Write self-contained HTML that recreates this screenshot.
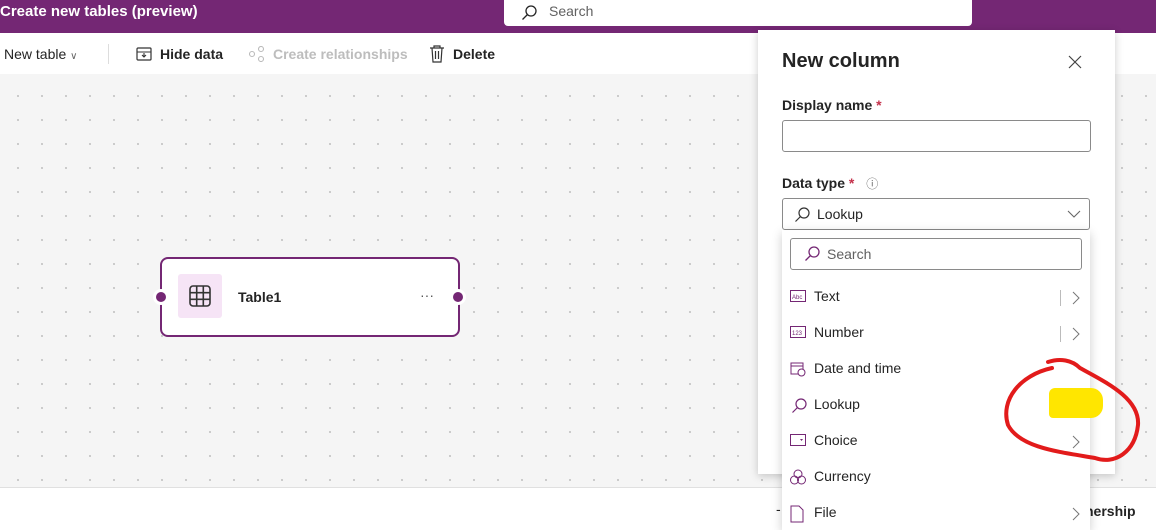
<!DOCTYPE html>
<html><head><style>
*{box-sizing:border-box;margin:0;padding:0}
body{width:1156px;height:525px;overflow:hidden;position:relative;font-family:"Segoe UI","Liberation Sans",sans-serif;background:#fff;color:#242424}
.top{position:absolute;left:0;top:0;width:1156px;height:33px;background:#742774}
.title{position:absolute;left:0;top:3px;color:#fff;font-weight:bold;font-size:15px}
.search{position:absolute;left:504px;top:0;width:468px;height:26px;background:#fff;border-radius:0 0 4px 4px;font-size:14px;color:#616161}
.tb{position:absolute;top:33px;left:0;width:1156px;height:41px;background:#fff;font-size:14px}
.tb span{position:absolute;top:13px}
.canvas{position:absolute;left:0;top:74px;width:1156px;height:413px;background-color:#f5f5f5;background-image:radial-gradient(circle,#c8c8c8 1px,transparent 1.2px);background-size:24px 24px;background-position:6px 10px}
.bottom{position:absolute;left:0;top:487px;width:1156px;height:38px;background:#fff;border-top:1px solid #e0e0e0}
.card{position:absolute;left:160px;top:257px;width:300px;height:80px;background:#fff;border:2px solid #742774;border-radius:8px}
.dot{position:absolute;width:10px;height:10px;border-radius:50%;background:#742774;box-shadow:0 0 0 3px #fff}
.panel{position:absolute;left:758px;top:30px;width:357px;height:444px;background:#fff;box-shadow:0 2px 8px rgba(0,0,0,.2)}
.lbl{position:absolute;font-size:14px;font-weight:600;color:#242424}
.req{color:#c4314b}
.input{position:absolute;border:1px solid #8a8a8a;border-radius:3px;background:#fff}
.dd{position:absolute;left:782px;top:230px;width:308px;height:300px;background:#fff;box-shadow:0 3px 10px rgba(0,0,0,.2)}
.it{position:absolute;left:0;width:308px;height:36px;font-size:14px;color:#242424}
.it .t{position:absolute;left:32px;top:10px}
.it svg{position:absolute;left:8px;top:12px}
.it svg.chev{left:290px;top:13px}
.sep{position:absolute;left:278px;top:12px;width:1px;height:16px;background:#bbb}
</style></head><body>
<div class="top"><div class="title">Create new tables (preview)</div>
<div class="search"><svg style="position:absolute;left:16px;top:4px" width="18" height="18" viewBox="0 0 18 18"><circle cx="11" cy="7" r="5" fill="none" stroke="#242424" stroke-width="1.3"/><path d="M7.5 10.5L2.5 15.5" stroke="#242424" stroke-width="1.3"/></svg><span style="position:absolute;left:45px;top:3px">Search</span></div></div>
<div class="tb">
<span style="left:4px">New table <span style="position:static;font-size:10px;color:#666">&#8744;</span></span>
<div style="position:absolute;left:108px;top:11px;width:1px;height:20px;background:#ddd"></div>
<svg style="position:absolute;left:136px;top:14px" width="16" height="14" viewBox="0 0 16 14"><rect x="1" y="1" width="14" height="12" rx="1" fill="none" stroke="#333" stroke-width="1.2"/><path d="M1 5h14M8 6v4M6 8l2 2 2-2" stroke="#333" fill="none" stroke-width="1.1"/></svg>
<span style="left:160px;font-weight:600">Hide data</span>
<svg style="position:absolute;left:248px;top:13px" width="18" height="16" viewBox="0 0 18 16"><g fill="none" stroke="#bbb" stroke-width="1.1"><circle cx="4" cy="8" r="2.5"/><circle cx="13" cy="3" r="2.5"/><circle cx="13" cy="13" r="2.5"/></g></svg>
<span style="left:273px;color:#bdbdbd;font-weight:600">Create relationships</span>
<svg style="position:absolute;left:429px;top:12px" width="16" height="18" viewBox="0 0 16 18"><path d="M1 3h14M5 3V1h6v2M3 3l1 14h8l1-14M6.5 6v8M9.5 6v8" fill="none" stroke="#333" stroke-width="1.2"/></svg>
<span style="left:453px;font-weight:600">Delete</span>
</div>
<div class="canvas"></div>
<div class="bottom"><span style="position:absolute;left:1085px;top:15px;font-size:14px;font-weight:600">nership</span><span style="position:absolute;left:776px;top:13px;font-size:14px">-</span></div>
<div class="card">
<div style="position:absolute;left:16px;top:15px;width:44px;height:44px;background:#f6e4f6;border-radius:3px"><svg style="position:absolute;left:11px;top:11px" width="22" height="22" viewBox="0 0 22 22"><rect x="1" y="1" width="20" height="20" rx="3" fill="none" stroke="#333" stroke-width="1.6"/><path d="M1 7.7h20M1 14.3h20M7.7 1v20M14.3 1v20" stroke="#333" stroke-width="1.6"/></svg></div>
<div style="position:absolute;left:76px;top:30px;font-size:14px;font-weight:bold">Table1</div>
<div style="position:absolute;left:258px;top:28px;font-size:14px;color:#555">···</div>
</div>
<div class="dot" style="left:156px;top:292px"></div>
<div class="dot" style="left:453px;top:292px"></div>
<div class="panel">
<div style="position:absolute;left:24px;top:20px;font-size:20px;font-weight:600">New column</div>
<svg style="position:absolute;left:310px;top:25px" width="14" height="14" viewBox="0 0 14 14"><path d="M1 1l12 12M13 1L1 13" stroke="#444" stroke-width="1.2"/></svg>
<div class="lbl" style="left:24px;top:67px">Display name <span class="req">*</span></div>
<div class="input" style="left:24px;top:90px;width:309px;height:32px"></div>
<div class="lbl" style="left:24px;top:145px">Data type <span class="req">*</span> <span style="font-weight:normal;font-size:12px;color:#666;margin-left:8px">&#9432;</span></div>
<div class="input" style="left:24px;top:168px;width:308px;height:32px"><svg style="position:absolute;left:10px;top:7px" width="18" height="18" viewBox="0 0 18 18"><circle cx="11" cy="7" r="5" fill="none" stroke="#333" stroke-width="1.2"/><path d="M7.5 10.5L2.5 15.5" stroke="#333" stroke-width="1.2"/></svg><span style="position:absolute;left:34px;top:7px;font-size:14px">Lookup</span><svg style="position:absolute;left:284px;top:11px" width="14" height="8" viewBox="0 0 14 8"><path d="M1 1l6 6 6-6" fill="none" stroke="#666" stroke-width="1.1"/></svg></div>
</div>
<div class="dd">
<div class="input" style="left:8px;top:8px;width:292px;height:32px"><svg style="position:absolute;left:12px;top:6px" width="18" height="18" viewBox="0 0 18 18"><circle cx="11" cy="7" r="5" fill="none" stroke="#742774" stroke-width="1.3"/><path d="M7.5 10.5L2.5 15.5" stroke="#742774" stroke-width="1.3"/></svg><span style="position:absolute;left:36px;top:7px;font-size:14px;color:#616161">Search</span></div>
<div class="it" style="top:48px"><svg width="16" height="12" viewBox="0 0 16 12"><rect x=".5" y=".5" width="15" height="11" fill="none" stroke="#742774"/><text x="2" y="9" font-size="6" fill="#742774" font-family="Liberation Sans">Abc</text></svg><span class="t">Text</span><div class="sep"></div><svg class="chev" width="8" height="14" viewBox="0 0 8 14"><path d="M1 1l6 6-6 6" fill="none" stroke="#777"/></svg></div>
<div class="it" style="top:84px"><svg width="16" height="12" viewBox="0 0 16 12"><rect x=".5" y=".5" width="15" height="11" fill="none" stroke="#742774"/><text x="2" y="9" font-size="6" fill="#742774" font-family="Liberation Sans">123</text></svg><span class="t">Number</span><div class="sep"></div><svg class="chev" width="8" height="14" viewBox="0 0 8 14"><path d="M1 1l6 6-6 6" fill="none" stroke="#777"/></svg></div>
<div class="it" style="top:120px"><svg width="16" height="16" viewBox="0 0 16 16" style="top:11px"><rect x="1" y="2" width="12" height="11" fill="none" stroke="#742774"/><path d="M1 5h12" stroke="#742774"/><circle cx="11.5" cy="11.5" r="3.5" fill="#fff" stroke="#742774"/></svg><span class="t">Date and time</span></div>
<div class="it" style="top:156px"><svg width="18" height="18" viewBox="0 0 18 18" style="top:11px"><circle cx="11" cy="7" r="5" fill="none" stroke="#742774" stroke-width="1.2"/><path d="M7.5 10.5L2.5 15.5" stroke="#742774" stroke-width="1.2"/></svg><span class="t">Lookup</span></div>
<div class="it" style="top:192px"><svg width="16" height="12" viewBox="0 0 16 12"><rect x=".5" y=".5" width="15" height="11" fill="none" stroke="#742774"/><path d="M10 5h3l-1.5 2z" fill="#742774"/></svg><span class="t">Choice</span><svg class="chev" width="8" height="14" viewBox="0 0 8 14"><path d="M1 1l6 6-6 6" fill="none" stroke="#777"/></svg></div>
<div class="it" style="top:228px"><svg width="16" height="16" viewBox="0 0 16 16" style="top:11px"><g fill="none" stroke="#742774"><circle cx="8" cy="5" r="4"/><circle cx="4.5" cy="11" r="4"/><circle cx="11.5" cy="11" r="4"/></g></svg><span class="t">Currency</span></div>
<div class="it" style="top:264px"><svg width="14" height="18" viewBox="0 0 14 18" style="top:11px"><path d="M1 1h8l4 4v12H1z" fill="none" stroke="#742774"/></svg><span class="t">File</span><svg class="chev" width="8" height="14" viewBox="0 0 8 14"><path d="M1 1l6 6-6 6" fill="none" stroke="#777"/></svg></div>
</div>
<div style="position:absolute;left:1049px;top:388px;width:54px;height:30px;background:#ffe600;border-radius:6px 12px 12px 4px"></div>
<svg style="position:absolute;left:0;top:0" width="1156" height="525"><path d="M1048 362 C1060 358 1072 360 1080 368 C1105 382 1140 398 1138 425 C1135 452 1115 465 1095 458 C1060 452 1020 448 1008 425 C1000 400 1020 375 1052 368" fill="none" stroke="#e21b1b" stroke-width="4" stroke-linecap="round"/></svg>
</body></html>
